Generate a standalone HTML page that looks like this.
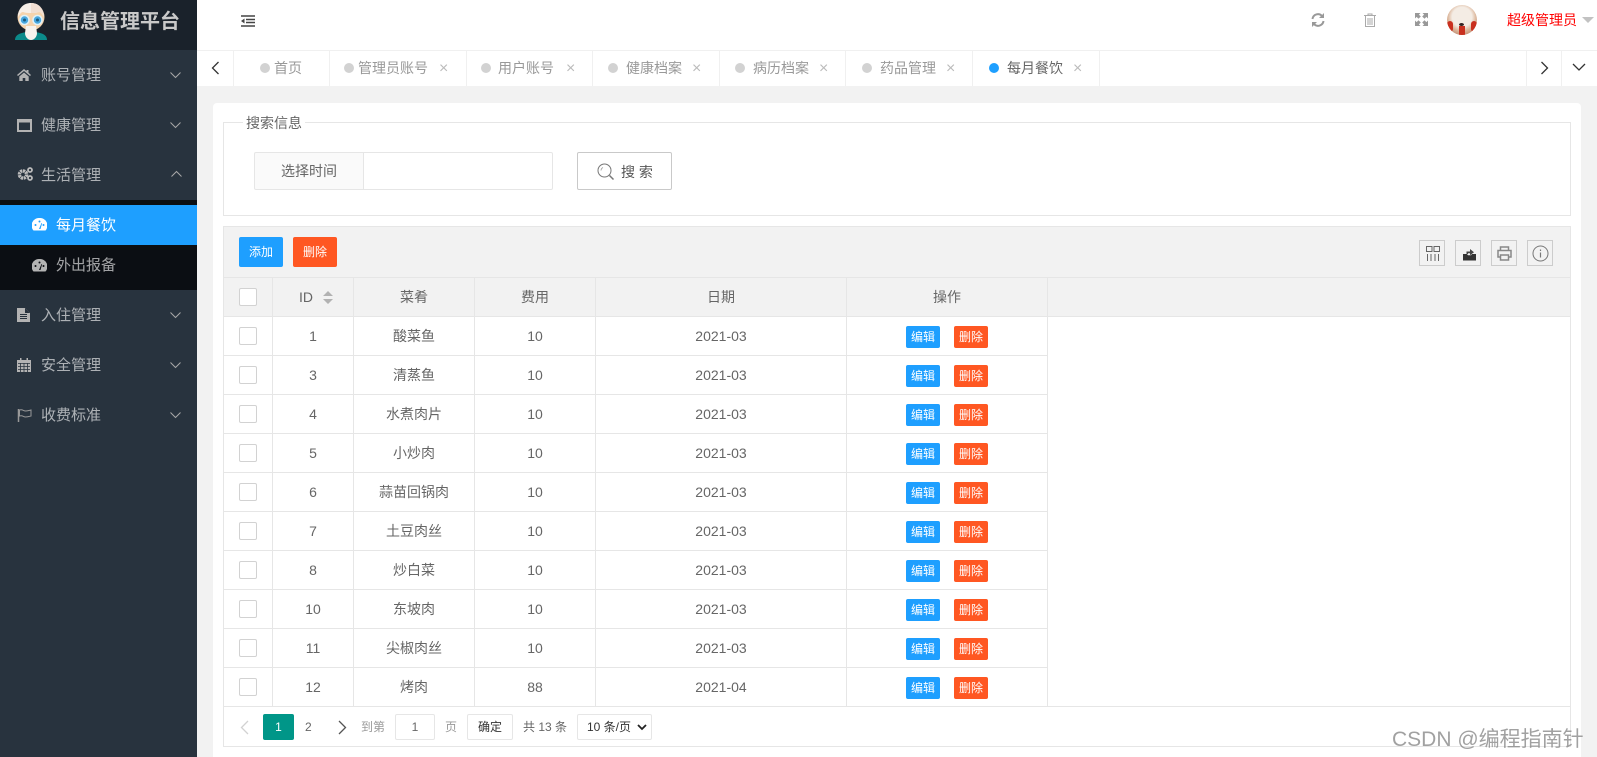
<!DOCTYPE html>
<html lang="zh"><head><meta charset="utf-8"><title>信息管理平台</title>
<style>
*{box-sizing:border-box}
html,body{margin:0;padding:0;width:1597px;height:757px;overflow:hidden;background:#f2f2f2;font-family:"Liberation Sans","Noto Sans CJK SC",sans-serif;font-size:14px;color:#666}
.a{position:absolute}
#side{left:0;top:0;width:197px;height:757px;background:#28333e}
#logo{left:0;top:0;width:197px;height:50px;background:#1a222b}
#logo b{position:absolute;left:60px;top:7px;font-size:20px;line-height:30px;color:#c9c9c9;white-space:nowrap}
.m{position:absolute;left:41px;width:100px;line-height:20px;font-size:15px;color:rgba(255,255,255,.62);white-space:nowrap}
.ic{position:absolute}
#sub{left:0;top:200px;width:197px;height:90px;background:#0b0e13}
#act{left:0;top:205px;width:197px;height:40px;background:#1e9fff}
#top{left:197px;top:0;width:1400px;height:50px;background:#fff}
#tabs{left:197px;top:50px;width:1400px;height:36px;background:#fff}
#tl{left:197px;top:50px;width:1400px;height:1px;background:#f0f0f0}
.sep{position:absolute;top:0;width:1px;height:36px;background:#f0f0f0}
.t{position:absolute;top:8px;line-height:20px;color:#999;white-space:nowrap;font-size:14px}
.d{position:absolute;top:13px;width:10px;height:10px;border-radius:50%;background:#d2d2d2}
.x{position:absolute;top:9px;color:#bbb;font-size:16px;line-height:20px}
#card{left:213px;top:103px;width:1368px;height:654px;background:#fff;border-radius:4px 4px 0 0}
#fs{left:223px;top:122px;width:1348px;height:94px;border:1px solid #e6e6e6}
#lg{left:243px;top:113px;padding:0 3px;background:#fff;line-height:20px;color:#666;font-size:14px}
#lab{left:254px;top:152px;width:110px;height:38px;background:#fafafa;border:1px solid #e6e6e6;border-radius:2px 0 0 2px;text-align:center;line-height:37px;color:#666}
#inp{left:364px;top:152px;width:189px;height:38px;background:#fff;border:1px solid #e6e6e6;border-left:0;border-radius:0 2px 2px 0}
#sb{left:577px;top:152px;width:95px;height:38px;background:#fff;border:1px solid #c9c9c9;border-radius:2px}
#sb span{position:absolute;left:43px;top:9px;line-height:20px;color:#555;white-space:nowrap}
#tb{left:223px;top:226px;width:1348px;height:52px;background:#f2f2f2;border:1px solid #e6e6e6}
#thb{left:223px;top:277px;width:1348px;height:40px;background:#f2f2f2;border:1px solid #e6e6e6}
.btn{position:absolute;top:237px;width:44px;height:30px;border-radius:2px;color:#fff;font-size:12px;line-height:30px;text-align:center}
.ti{position:absolute;top:240px;width:26px;height:26px;border:1px solid #ccc}
table{position:absolute;left:223px;top:277px;width:825px;table-layout:fixed;border-collapse:collapse}
td,th{border:1px solid #e6e6e6;text-align:center;height:39px;padding:0;font-weight:400;color:#666;font-size:14px;position:relative}
th{background:#f2f2f2}
.c{display:block;width:18px;height:18px;margin-left:15px;background:#fff;border:1px solid #d2d2d2;border-radius:2px}
.e,.r{display:inline-block;position:relative;left:0;top:1px;width:34px;height:22px;line-height:22px;border-radius:2px;color:#fff;font-size:12px;vertical-align:middle}
.e{background:#1e9fff;margin-right:14px}.r{background:#ff5722}
#ft{left:223px;top:706px;width:1348px;height:41px;border:1px solid #e6e6e6;background:#fff}
.p{position:absolute;line-height:20px;top:717px;font-size:12px;color:#666;white-space:nowrap}
.bx{position:absolute;top:714px;height:26px;border:1px solid #e6e6e6;border-radius:2px;background:#fff;text-align:center;line-height:25px;font-size:12px;color:#333}
#wm{left:1392px;top:727px;font-size:21px;line-height:26px;color:rgba(125,125,125,.72);white-space:nowrap}
</style></head><body>
<div class="a" id="side"></div>
<div class="a" id="logo">
<svg class="ic" style="left:0;top:0" width="60" height="50" viewBox="0 0 60 50"><path d="M15 40c0-5 5-8 16-8s16 3 16 8z" fill="#0b8a8a"/><circle cx="31" cy="17" r="13.500" fill="#f6d3ac"/><path d="M18 17C18 8 24 3 31 3s13 5 13 14c-2-3-3-5-5-5-3 1-5 1-8 1s-5 0-8-1c-2 0-3 2-5 5z" fill="#f7efe8"/><path d="M31 3c7 0 13 5 13 14-2-3-3-5-5-5-3 1-5 1-8 1z" fill="#f2dfd2"/><circle cx="24.500" cy="20" r="4.500" fill="#49a8e0" stroke="#dff1f8" stroke-width="1.600"/><circle cx="37.500" cy="20" r="4.500" fill="#49a8e0" stroke="#dff1f8" stroke-width="1.600"/><circle cx="24.500" cy="20" r="1.500" fill="#1d5a7d"/><circle cx="37.500" cy="20" r="1.500" fill="#1d5a7d"/><path d="M26 26h10l1 7c0 4-3 7-6 7s-6-3-6-7z" fill="#f7f3ee"/></svg>
<b>信息管理平台</b></div>

<svg class="ic" style="left:17px;top:69px" width="14" height="12" viewBox="0 0 14 12"><path d="M7 0 9.500 2.100V1H11.500V3.800L14 6l-1 1-6-5-6 5-1-1zM2.300 7.500 7 3.500l4.700 4V12H8.300V9H5.700v3H2.300z" fill="#b3b3b3"/></svg>
<div class="m" style="top:66px">账号管理</div>
<svg class="ic" style="left:17px;top:119px" width="15" height="13" viewBox="0 0 15 13"><path d="M0 0h15v13H0zM2 3.500V11h11V3.500z" fill="#b3b3b3" fill-rule="evenodd"/></svg>
<div class="m" style="top:116px">健康管理</div>
<svg class="ic" style="left:17px;top:167px" width="16" height="14" viewBox="0 0 16 14"><circle cx="6" cy="7.500" r="3.600" fill="none" stroke="#bbb" stroke-width="3.400" stroke-dasharray="2.200 .6"/><circle cx="13" cy="3" r="2" fill="none" stroke="#bbb" stroke-width="1.800"/><circle cx="13" cy="11" r="2" fill="none" stroke="#bbb" stroke-width="1.800"/></svg>
<div class="m" style="top:166px">生活管理</div>
<svg class="ic" style="left:170px;top:71px" width="11" height="8" viewBox="0 0 11 8"><path d="M.5 1.500 5.500 6.500l5-5" fill="none" stroke="#a8a8a8"/></svg>
<svg class="ic" style="left:170px;top:121px" width="11" height="8" viewBox="0 0 11 8"><path d="M.5 1.500 5.500 6.500l5-5" fill="none" stroke="#a8a8a8"/></svg>
<svg class="ic" style="left:171px;top:170px" width="11" height="8" viewBox="0 0 11 8"><path d="M.5 6.500 5.500 1.500l5 5" fill="none" stroke="#a8a8a8"/></svg>

<div class="a" id="sub"></div>
<div class="a" id="act"></div>
<svg class="ic" style="left:32px;top:218px" width="15" height="13" viewBox="0 0 15 13"><path d="M7.500 0A7.500 7.500 0 0 0 1.500 12.500h12A7.500 7.500 0 0 0 7.500 0z" fill="#fff"/><g fill="#1e9fff"><circle cx="3.500" cy="7" r="1"/><circle cx="7.500" cy="3.500" r="1"/><circle cx="11.500" cy="7" r="1"/><path d="M7 11 9.500 5l.6.2L8.500 11z"/></g></svg>
<div class="m" style="left:56px;top:216px;color:#fff">每月餐饮</div>
<svg class="ic" style="left:32px;top:259px" width="15" height="13" viewBox="0 0 15 13"><path d="M7.500 0A7.500 7.500 0 0 0 1.500 12.500h12A7.500 7.500 0 0 0 7.500 0z" fill="#b3b3b3"/><g fill="#0b0e13"><circle cx="3.500" cy="7" r="1"/><circle cx="7.500" cy="3.500" r="1"/><circle cx="11.500" cy="7" r="1"/><path d="M7 11 9.500 5l.6.2L8.500 11z"/></g></svg>
<div class="m" style="left:56px;top:256px">外出报备</div>

<svg class="ic" style="left:17px;top:308px" width="13" height="14" viewBox="0 0 13 14"><path d="M0 0h8l5 5v9H0z" fill="#b3b3b3"/><path d="M8 0v5h5" fill="#28333e"/><path d="M3 6.500h7M3 8.500h7M3 10.500h7" stroke="#28333e"/></svg>
<div class="m" style="top:306px">入住管理</div>
<svg class="ic" style="left:17px;top:358px" width="14" height="14" viewBox="0 0 14 14"><path d="M0 2h14v12H0z" fill="#b3b3b3"/><path d="M3 0h1.500v3H3zM9.500 0H11v3H9.500z" fill="#b3b3b3"/><path d="M1 5.500h12M1 8.500h12M1 11.500h12M3.500 5v9M7 5v9M10.500 5v9" stroke="#28333e" stroke-width=".8"/></svg>
<div class="m" style="top:356px">安全管理</div>
<svg class="ic" style="left:17px;top:408px" width="15" height="14" viewBox="0 0 15 14"><path d="M1.500 1v13" stroke="#999" stroke-width="1.500"/><path d="M2.500 2c3-1 4 1 6 1s3-.5 5.500-1v6c-2.500.7-3.500 1-5.500 1s-3-2-6-1z" fill="none" stroke="#999"/></svg>
<div class="m" style="top:406px">收费标准</div>
<svg class="ic" style="left:170px;top:311px" width="11" height="8" viewBox="0 0 11 8"><path d="M.5 1.500 5.500 6.500l5-5" fill="none" stroke="#a8a8a8"/></svg>
<svg class="ic" style="left:170px;top:361px" width="11" height="8" viewBox="0 0 11 8"><path d="M.5 1.500 5.500 6.500l5-5" fill="none" stroke="#a8a8a8"/></svg>
<svg class="ic" style="left:170px;top:411px" width="11" height="8" viewBox="0 0 11 8"><path d="M.5 1.500 5.500 6.500l5-5" fill="none" stroke="#a8a8a8"/></svg>

<div class="a" id="top"></div>
<svg class="ic" style="left:241px;top:15px" width="14" height="12" viewBox="0 0 14 12"><path d="M0 1h14M5 4.500h9M5 7.500h9M0 11h14" stroke="#444" stroke-width="1.500"/><path d="M0 6l3.500-2.500v5z" fill="#444"/></svg>
<svg class="ic" style="left:1311px;top:13px" width="14" height="14" viewBox="0 0 14 14"><path d="M1.500 6A5.500 5.500 0 0 1 11 3M12.500 8A5.500 5.500 0 0 1 3 11" fill="none" stroke="#999" stroke-width="2"/><path d="M13 0v5H8zM1 14V9h5z" fill="#999"/></svg>
<svg class="ic" style="left:1364px;top:13px" width="12" height="14" viewBox="0 0 12 14"><path d="M0 2.500h12M4 2.500V1h4v1.500M1.500 3v10.500h9V3M4 5v7M6 5v7M8 5v7" fill="none" stroke="#aaa"/></svg>
<svg class="ic" style="left:1415px;top:13px" width="13" height="13" viewBox="0 0 13 13"><path d="M0 0h5.500L3.900 1.600 5.800 3.500 3.500 5.800 1.600 3.900 0 5.500zM13 0v5.500l-1.600-1.600-1.900 1.900-2.300-2.300 1.900-1.900L7.500 0zM0 13V7.500l1.600 1.600 1.900-1.900 2.300 2.300-1.900 1.900L5.500 13zM13 13H7.500l1.600-1.600-1.900-1.900 2.300-2.300 1.900 1.900L13 7.500z" fill="#999"/></svg>
<div class="a" style="left:1447px;top:5px;width:30px;height:30px;border-radius:50%;overflow:hidden;background:radial-gradient(circle at 50% 40%,#f4ece4 0 42%,#dcb79c 60%,#a8654c 100%)">
<div class="a" style="left:0;top:16px;width:6px;height:11px;background:#c9301f;border-radius:3px"></div>
<div class="a" style="right:0;top:16px;width:6px;height:11px;background:#c9301f;border-radius:3px"></div>
<div class="a" style="left:12px;top:21px;width:6px;height:9px;background:#c9301f"></div>
<div class="a" style="left:12px;top:18px;width:5px;height:3px;border-radius:50%;background:#322"></div>
</div>
<div class="a" style="left:1507px;top:10px;line-height:20px;color:#f00;white-space:nowrap">超级管理员</div>
<div class="a" style="left:1582px;top:17px;width:0;height:0;border:6px solid transparent;border-top:6px solid #c2c2c2;border-bottom:0"></div>

<div class="a" id="tabs">
<div class="sep" style="left:36px"></div><div class="sep" style="left:132px"></div><div class="sep" style="left:269px"></div><div class="sep" style="left:395px"></div><div class="sep" style="left:522px"></div><div class="sep" style="left:648px"></div><div class="sep" style="left:775px"></div><div class="sep" style="left:902px"></div><div class="sep" style="left:1329px"></div><div class="sep" style="left:1364px"></div>
<svg class="ic" style="left:14px;top:11px" width="9" height="14" viewBox="0 0 9 14"><path d="M7.500 1 1.500 7l6 6" fill="none" stroke="#333" stroke-width="1.300"/></svg>
<svg class="ic" style="left:1343px;top:11px" width="9" height="14" viewBox="0 0 9 14"><path d="M1.500 1l6 6-6 6" fill="none" stroke="#333" stroke-width="1.300"/></svg>
<svg class="ic" style="left:1375px;top:13px" width="14" height="9" viewBox="0 0 14 9"><path d="M1 1l6 6 6-6" fill="none" stroke="#333" stroke-width="1.300"/></svg>
<div class="d" style="left:63px"></div><div class="t" style="left:77px">首页</div>
<div class="d" style="left:147px"></div><div class="t" style="left:161px">管理员账号</div><div class="x" style="left:242px">×</div>
<div class="d" style="left:284px"></div><div class="t" style="left:301px">用户账号</div><div class="x" style="left:369px">×</div>
<div class="d" style="left:411px"></div><div class="t" style="left:429px">健康档案</div><div class="x" style="left:495px">×</div>
<div class="d" style="left:538px"></div><div class="t" style="left:556px">病历档案</div><div class="x" style="left:622px">×</div>
<div class="d" style="left:665px"></div><div class="t" style="left:683px">药品管理</div><div class="x" style="left:749px">×</div>
<div class="d" style="left:792px;background:#1e9fff"></div><div class="t" style="left:810px;color:#666">每月餐饮</div><div class="x" style="left:876px">×</div>
</div>
<div class="a" id="tl"></div>

<div class="a" id="card"></div>
<div class="a" id="fs"></div>
<div class="a" id="lg">搜索信息</div>
<div class="a" id="lab">选择时间</div>
<div class="a" id="inp"></div>
<div class="a" id="sb"><svg class="ic" style="left:19px;top:10px" width="18" height="18" viewBox="0 0 18 18"><circle cx="7.500" cy="7.500" r="6.500" fill="none" stroke="#777"/><path d="M12.500 12.500l4 4" stroke="#777" stroke-width="1.500"/><path d="M4 7.500A3.500 3.500 0 0 1 6 4.500" fill="none" stroke="#999" stroke-width=".8"/></svg><span>搜 索</span></div>

<div class="a" id="tb"></div>
<div class="a" id="thb"></div>
<div class="btn" style="left:239px;background:#1e9fff">添加</div>
<div class="btn" style="left:293px;background:#ff5722">删除</div>
<div class="ti" style="left:1419px"><svg class="ic" style="left:6px;top:5px" width="14" height="15" viewBox="0 0 14 15"><path d="M.5.500h5.500v5H.5zM8 .5h5.500v5H8zM1.500 8v7M5 8v7M9 8v7M12.500 8v7" fill="none" stroke="#666"/></svg></div>
<div class="ti" style="left:1455px"><svg class="ic" style="left:6px;top:5px" width="15" height="15" viewBox="0 0 15 15"><path d="M1 8h4l1 1.200h3L10 8h4v6.500H1z" fill="#333"/><path d="M4.500 8V5.500H8V3l4 3.200L8 9.200V7.300H6V8z" fill="#444"/></svg></div>
<div class="ti" style="left:1491px"><svg class="ic" style="left:5px;top:5px" width="15" height="15" viewBox="0 0 15 15"><path d="M3.500 4V1h8v3M3.500 11H1V4.500h13V11h-2.500M3.500 9h8v5h-8z" fill="none" stroke="#888" stroke-width="1.500"/></svg></div>
<div class="ti" style="left:1527px"><svg class="ic" style="left:4px;top:4px" width="17" height="17" viewBox="0 0 17 17"><circle cx="8.500" cy="8.500" r="7.500" fill="none" stroke="#777"/><path d="M8.500 7.500v5M8.500 4.500v1.500" stroke="#777" stroke-width="1.200"/></svg></div>

<div class="a" id="ft"></div>
<table>
<colgroup><col style="width:49px"><col style="width:81px"><col style="width:121px"><col style="width:121px"><col style="width:251px"><col style="width:201px"></colgroup>
<tr><th><i class="c"></i></th><th style="padding-right:14px">ID<svg style="position:absolute;left:50px;top:13px" width="10" height="13" viewBox="0 0 10 13"><path d="M5 0l5 5H0zM5 13 0 8h10z" fill="#b2b2b2"/></svg></th><th>菜肴</th><th>费用</th><th>日期</th><th>操作</th></tr>
<tr><td><i class="c"></i></td><td>1</td><td>酸菜鱼</td><td>10</td><td>2021-03</td><td><span class="e">编辑</span><span class="r">删除</span></td></tr>
<tr><td><i class="c"></i></td><td>3</td><td>清蒸鱼</td><td>10</td><td>2021-03</td><td><span class="e">编辑</span><span class="r">删除</span></td></tr>
<tr><td><i class="c"></i></td><td>4</td><td>水煮肉片</td><td>10</td><td>2021-03</td><td><span class="e">编辑</span><span class="r">删除</span></td></tr>
<tr><td><i class="c"></i></td><td>5</td><td>小炒肉</td><td>10</td><td>2021-03</td><td><span class="e">编辑</span><span class="r">删除</span></td></tr>
<tr><td><i class="c"></i></td><td>6</td><td>蒜苗回锅肉</td><td>10</td><td>2021-03</td><td><span class="e">编辑</span><span class="r">删除</span></td></tr>
<tr><td><i class="c"></i></td><td>7</td><td>土豆肉丝</td><td>10</td><td>2021-03</td><td><span class="e">编辑</span><span class="r">删除</span></td></tr>
<tr><td><i class="c"></i></td><td>8</td><td>炒白菜</td><td>10</td><td>2021-03</td><td><span class="e">编辑</span><span class="r">删除</span></td></tr>
<tr><td><i class="c"></i></td><td>10</td><td>东坡肉</td><td>10</td><td>2021-03</td><td><span class="e">编辑</span><span class="r">删除</span></td></tr>
<tr><td><i class="c"></i></td><td>11</td><td>尖椒肉丝</td><td>10</td><td>2021-03</td><td><span class="e">编辑</span><span class="r">删除</span></td></tr>
<tr><td><i class="c"></i></td><td>12</td><td>烤肉</td><td>88</td><td>2021-04</td><td><span class="e">编辑</span><span class="r">删除</span></td></tr>
</table>
<div class="a" style="left:1570px;top:277px;width:1px;height:430px;background:#e6e6e6"></div>

<svg class="ic" style="left:240px;top:720px" width="9" height="15" viewBox="0 0 9 15"><path d="M8 1 1.500 7.500 8 14" fill="none" stroke="#d2d2d2" stroke-width="1.300"/></svg>
<div class="a" style="left:263px;top:714px;width:31px;height:26px;background:#009688;color:#fff;border-radius:2px;text-align:center;line-height:26px;font-size:12px">1</div>
<div class="p" style="left:305px">2</div>
<svg class="ic" style="left:338px;top:720px" width="9" height="15" viewBox="0 0 9 15"><path d="M1 1l6.500 6.500L1 14" fill="none" stroke="#555" stroke-width="1.300"/></svg>
<div class="p" style="left:361px;color:#999">到第</div>
<div class="bx" style="left:395px;width:40px;color:#666">1</div>
<div class="p" style="left:445px;color:#999">页</div>
<div class="bx" style="left:467px;width:46px">确定</div>
<div class="p" style="left:523px">共 13 条</div>
<div class="bx" style="left:577px;width:75px;text-align:left;padding-left:9px">10 条/页<svg class="ic" style="left:59px;top:9px" width="10" height="7" viewBox="0 0 10 7"><path d="M1 1l4 4 4-4" fill="none" stroke="#222" stroke-width="1.800"/></svg></div>
<div class="a" id="wm">CSDN @编程指南针</div>
</body></html>
